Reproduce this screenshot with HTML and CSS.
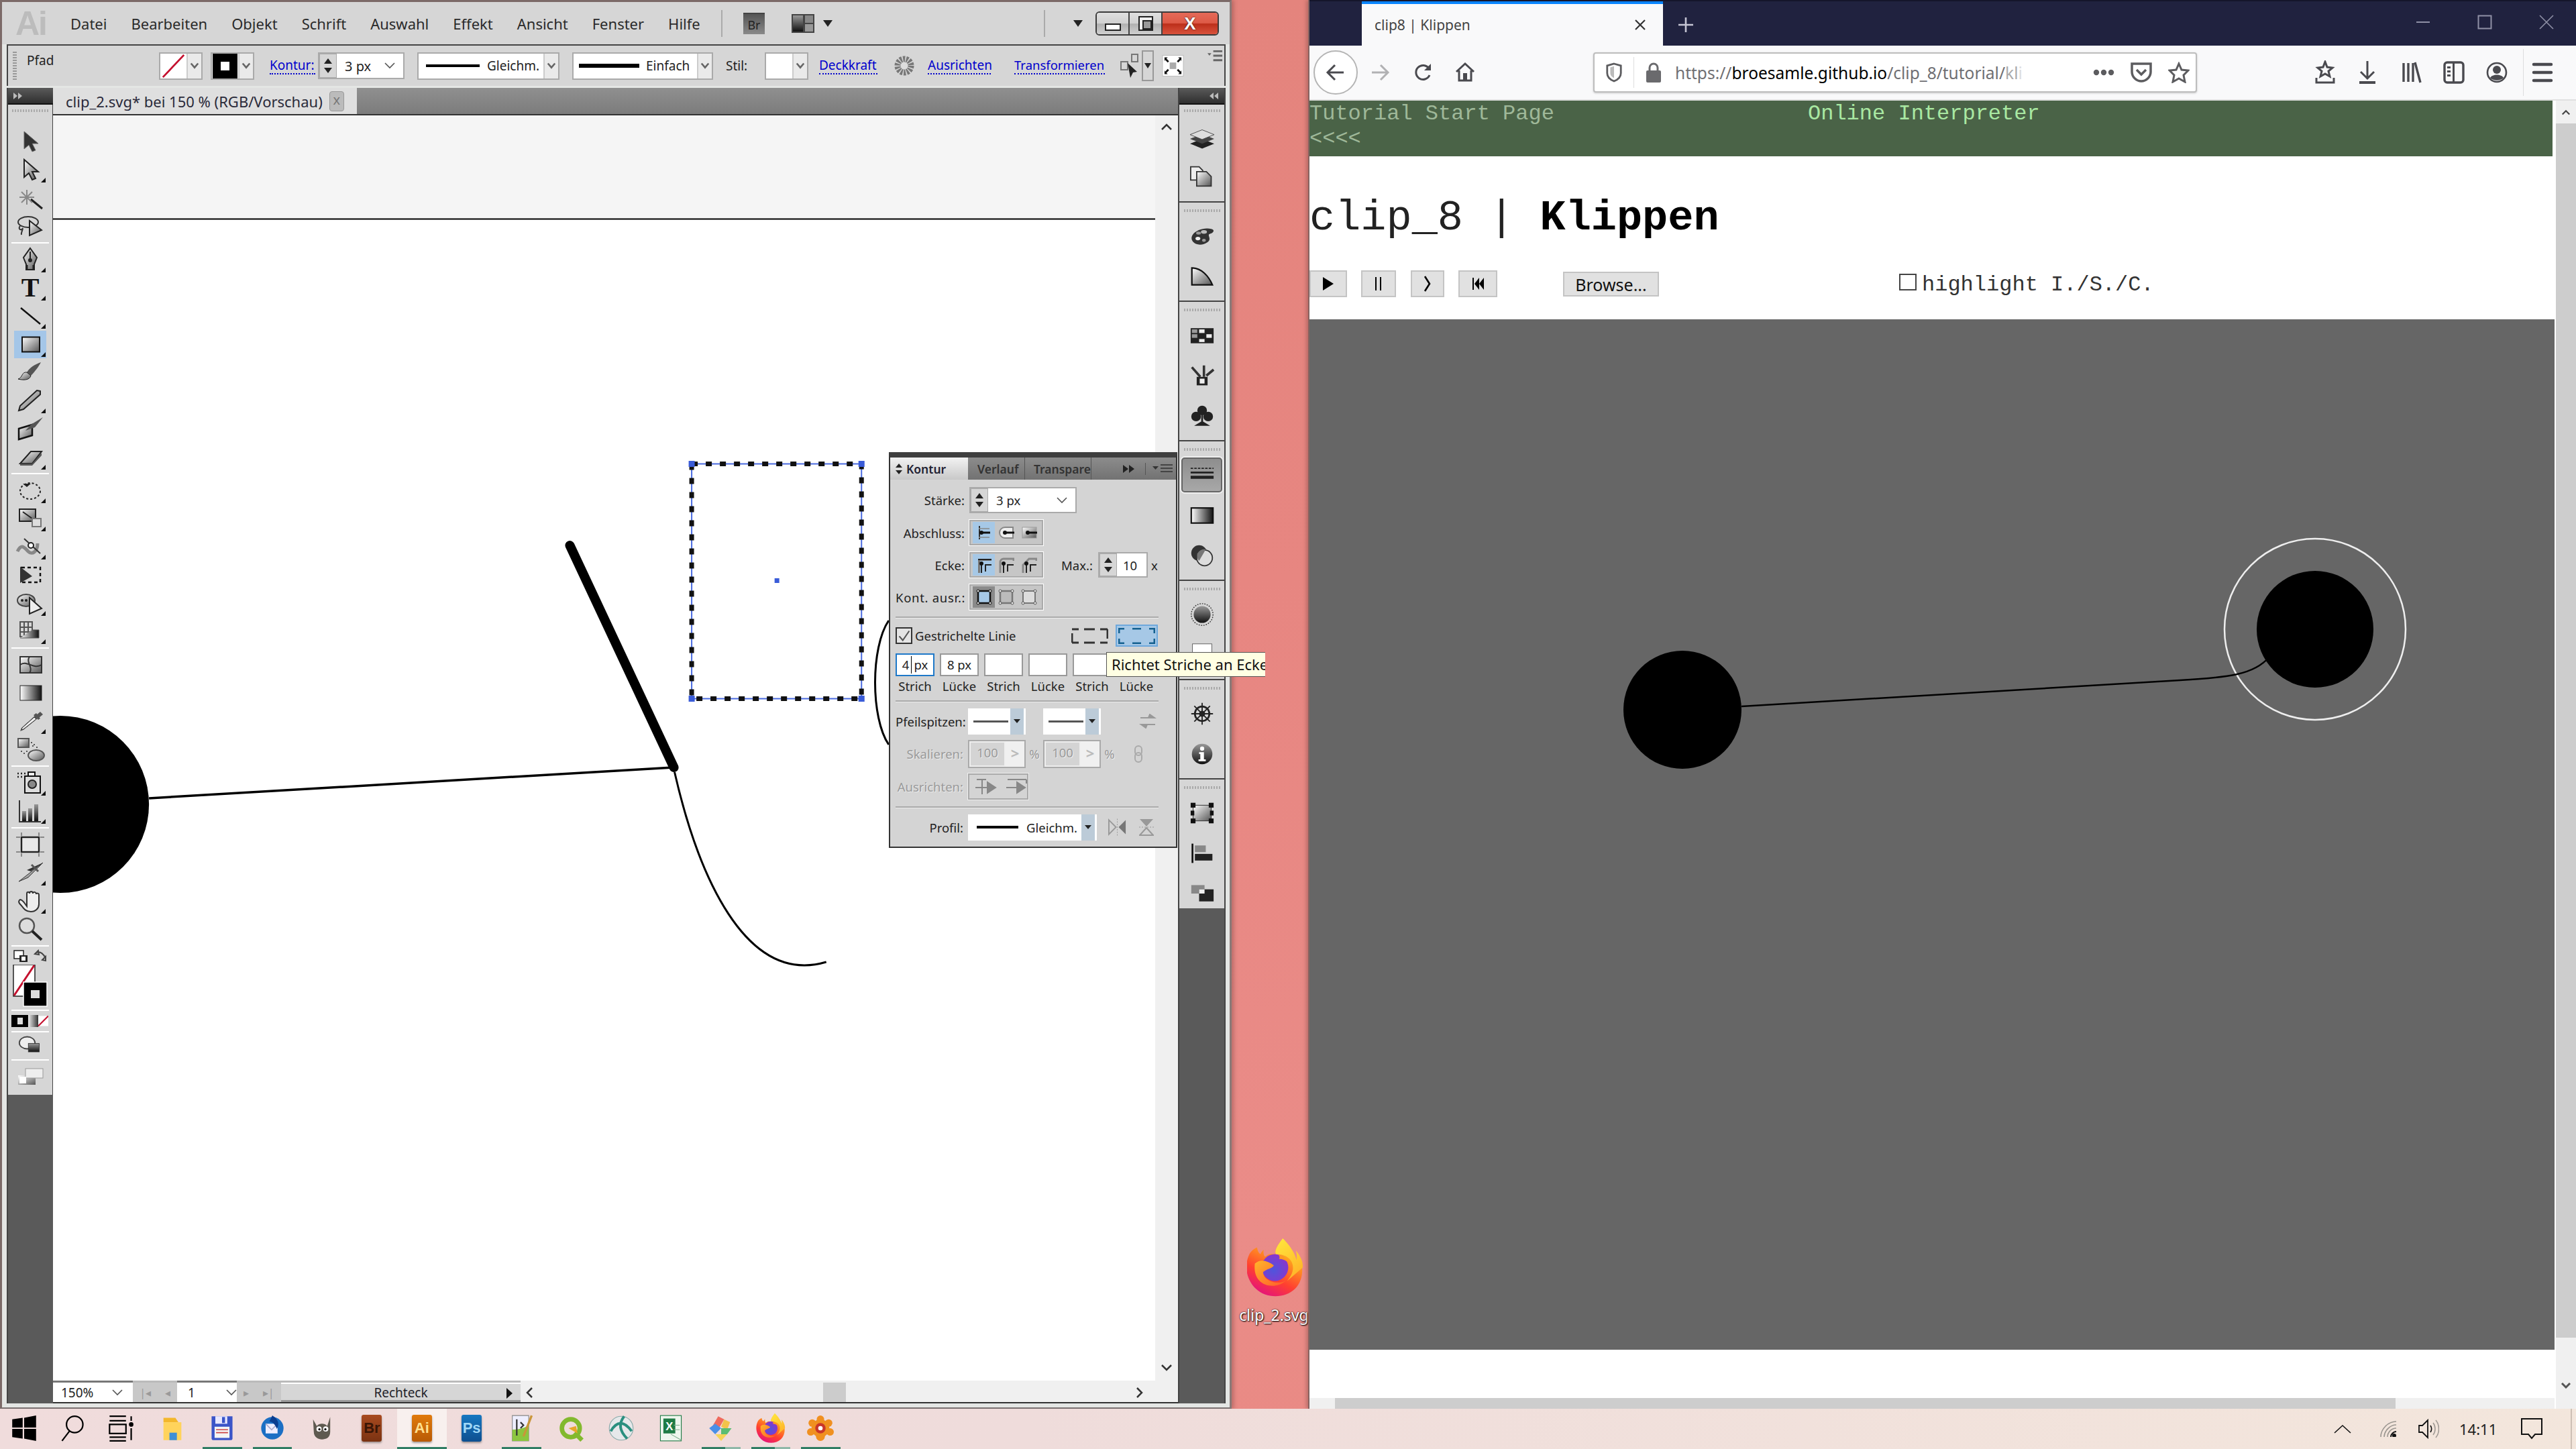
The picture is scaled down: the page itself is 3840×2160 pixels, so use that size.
FILE: index.html
```html
<!DOCTYPE html>
<html lang="de">
<head>
<meta charset="utf-8">
<title>Illustrator und Firefox</title>
<link rel="stylesheet" href="styles.css">
</head>
<body>
<svg class="defs" aria-hidden="true">
  <defs>
    <linearGradient id="gr" x1="0" y1="0" x2="1" y2="1"><stop offset="0" stop-color="#fff"/><stop offset="1" stop-color="#555"/></linearGradient>
    <linearGradient id="grd" x1="0" y1="0" x2="0" y2="1"><stop offset="0" stop-color="#999"/><stop offset="1" stop-color="#111"/></linearGradient>
    <linearGradient id="grh" x1="0" y1="0" x2="1" y2="0"><stop offset="0" stop-color="#fff"/><stop offset="1" stop-color="#111"/></linearGradient>
    <linearGradient id="ffBody" x1=".85" y1="0" x2=".35" y2="1"><stop offset="0" stop-color="#ffe23c"/><stop offset=".35" stop-color="#ff9a1f"/><stop offset=".7" stop-color="#ff3f30"/><stop offset="1" stop-color="#e5147a"/></linearGradient>
    <linearGradient id="ffTop" x1="0" y1="0" x2=".5" y2="1"><stop offset="0" stop-color="#ffe93d"/><stop offset="1" stop-color="#ffb52a"/></linearGradient>
    <radialGradient id="ffGlobe" cx=".45" cy=".6" r=".6"><stop offset="0" stop-color="#4f55dc"/><stop offset="1" stop-color="#8a35cc"/></radialGradient>
    <linearGradient id="ffFox" x1="0" y1="0" x2="1" y2="1"><stop offset="0" stop-color="#ffb52a"/><stop offset="1" stop-color="#ff5a2a"/></linearGradient>
    <symbol id="ffLogo" viewBox="0 0 250 260">
      <path d="M8 75C-12 120-6 182 40 226c45 44 130 44 175 0 45-45 40-120 5-171 5 20 3 38 2 40C206 40 160 0 160 0c-34 44-36 60-30 72-28-8-36 0-50 10-6-8-8-22-5-32-10 6-15 20-15 20-10-6-14-20-15-30C26 48 15 60 8 75Z" fill="url(#ffBody)"/>
      <path d="M160 0c-34 44-36 60-30 72 60-6 108 50 50 118l70-60c2-30-14-56-30-75 5 20 3 38 2 40C206 40 160 0 160 0Z" fill="url(#ffTop)"/>
      <circle cx="125" cy="130" r="60" fill="url(#ffGlobe)"/>
      <path d="M35 112c25-22 55-14 85 8-8 16-30 14-48 30 0 34 55 60 100 40-44 42-150 28-137-78Z" fill="url(#ffFox)"/>
      <path d="M140 72c20 4 38 18 42 34-8-8-24-16-38-14 4-8 2-14-4-20Z" fill="#ff9a1f"/>
    </symbol>
    <symbol id="chev" viewBox="0 0 16 10"><path d="M1 1l7 7 7-7" fill="none" stroke="#555" stroke-width="1.6"/></symbol>
    <symbol id="chevb" viewBox="0 0 16 12"><path d="M2 2l6 7 6-7" fill="none" stroke="#666" stroke-width="3"/></symbol>
  </defs>
</svg>

<main class="desktop">
  <div class="shortcut">
    <svg class="shortcut-logo"><use href="#ffLogo"/></svg>
    <span class="shortcut-label">clip_2.svg</span>
  </div>

  <section class="ai">
    <header class="ai-menu">
      <span class="ai-logo">Ai</span>
      <nav class="ai-menu-items">
        <span>Datei</span><span>Bearbeiten</span><span>Objekt</span><span>Schrift</span><span>Auswahl</span><span>Effekt</span><span>Ansicht</span><span>Fenster</span><span>Hilfe</span>
      </nav>
      <i class="vsep sep-a"></i>
      <span class="br-badge">Br</span>
      <svg class="layout-ic" viewBox="0 0 36 30"><rect x="1" y="1" width="34" height="28" fill="#444"/><rect x="3" y="3" width="15" height="24" fill="url(#grd)"/><rect x="21" y="3" width="12" height="11" fill="#888"/><rect x="21" y="16" width="12" height="11" fill="#999"/></svg>
      <i class="tri-down tri-a"></i>
      <i class="vsep sep-b"></i>
      <i class="tri-down tri-b"></i>
      <div class="winbtns">
        <span class="winbtn"><i class="w-min"></i></span>
        <span class="winbtn"><i class="w-max"></i></span>
        <span class="winbtn w-close">X</span>
      </div>
    </header>

    <div class="ai-control">
      <i class="grip-v"></i>
      <span class="ctl-path">Pfad</span>
      <div class="swatch-sel">
        <svg class="sw" viewBox="0 0 40 40"><rect width="40" height="40" fill="#fff"/><path d="M3 38L37 2" stroke="#c4102e" stroke-width="3"/></svg>
        <span class="sel-btn"><svg class="chevb"><use href="#chevb"/></svg></span>
      </div>
      <div class="swatch-sel stroke-sel">
        <svg class="sw" viewBox="0 0 40 40"><rect width="40" height="40" fill="#000"/><rect x="13" y="13" width="14" height="14" fill="#fff"/></svg>
        <span class="sel-btn"><svg class="chevb"><use href="#chevb"/></svg></span>
      </div>
      <a class="ctl-link lk-kontur">Kontur:</a>
      <div class="num-field nf-kontur"><span class="spin"><i></i><i></i></span><span class="num-val">3 px</span><svg class="chev"><use href="#chev"/></svg></div>
      <div class="line-sel ls-gleich"><i class="ln"></i><span>Gleichm.</span><span class="sel-btn"><svg class="chevb"><use href="#chevb"/></svg></span></div>
      <div class="line-sel ls-einfach"><i class="ln ln-thick"></i><span>Einfach</span><span class="sel-btn"><svg class="chevb"><use href="#chevb"/></svg></span></div>
      <span class="ctl-stil">Stil:</span>
      <div class="swatch-sel style-sel"><span class="sw sw-blank"></span><span class="sel-btn"><svg class="chevb"><use href="#chevb"/></svg></span></div>
      <a class="ctl-link lk-deck">Deckkraft</a>
      <svg class="recolor" viewBox="0 0 30 40"><circle cx="15" cy="20" r="10" fill="none" stroke="#777" stroke-width="9" stroke-dasharray="3 1.5"/><circle cx="15" cy="20" r="5" fill="#ddd"/></svg>
      <a class="ctl-link lk-aus">Ausrichten</a>
      <a class="ctl-link lk-trans">Transformieren</a>
      <svg class="isolate-ic" viewBox="0 0 30 40"><rect x="2" y="14" width="10" height="12" fill="none" stroke="#777" stroke-width="2"/><rect x="18" y="3" width="9" height="11" fill="none" stroke="#777" stroke-width="2"/><path d="M12 16l4 22 4-8 6-1Z" fill="#222"/></svg>
      <span class="mini-drop"><i class="tri-down"></i></span>
      <svg class="xform-ic" viewBox="0 0 34 40"><rect x="1" y="4" width="32" height="32" fill="#fff" stroke="#bbb"/><rect x="12" y="15" width="10" height="10" fill="#aaa"/><path d="M4 7l5 0-2 2 4 4-2 2-4-4-1 2ZM30 7l-5 0 2 2-4 4 2 2 4-4 1 2ZM4 33l5 0-2-2 4-4-2-2-4 4-1-2ZM30 33l-5 0 2-2-4-4 2-2 4 4 1-2Z" fill="#111"/></svg>
      <svg class="pmenu-ic" viewBox="0 0 24 18"><path d="M0 4h6l-3 4Z" fill="#666"/><path d="M9 1h14M9 8h14M9 15h14" stroke="#666" stroke-width="3"/></svg>
    </div>

    <div class="ai-body">
      <aside class="tools">
        <div class="side-head"><svg class="dbl" viewBox="0 0 14 12"><path d="M0 1l6 5-6 5ZM7 1l6 5-6 5Z" fill="#bbb"/></svg></div>
        <div class="tool-panel">
          <div class="tool-grip"><i class="dots"></i></div>
          <div class="tool"><svg viewBox="0 0 46 40"><path d="M14 5v26l7-6 5 10 5-2-5-10h9Z" fill="#333" stroke="#666"/></svg></div>
          <div class="tool more"><svg viewBox="0 0 46 40"><path d="M14 5v26l7-6 5 10 5-2-5-10h9Z" fill="url(#gr)" stroke="#222" stroke-width="2"/></svg></div>
          <div class="tool"><svg viewBox="0 0 46 40"><path d="M24 22l17 14" stroke="#222" stroke-width="3"/><path d="M18 8v22M7 19h22M10 11l16 16M26 11L10 27" stroke="#888" stroke-width="2"/></svg></div>
          <div class="tool"><svg viewBox="0 0 46 40"><ellipse cx="20" cy="14" rx="15" ry="8" fill="none" stroke="#333" stroke-width="2"/><path d="M8 20c-4 4 2 8 4 3-1 6-3 7-2 10" fill="none" stroke="#333" stroke-width="2"/><path d="M22 12v22l18-8Z" fill="url(#gr)" stroke="#222" stroke-width="2"/></svg></div>
          <i class="tool-sep"></i>
          <div class="tool more"><svg viewBox="0 0 46 40"><path d="M23 3l10 14-4 10v8H17v-8l-4-10Z" fill="url(#gr)" stroke="#222" stroke-width="2"/><path d="M23 8v12" stroke="#222" stroke-width="2"/><circle cx="23" cy="21" r="3" fill="#222"/><path d="M18 28v8M28 28v8" stroke="#222" stroke-width="3"/></svg></div>
          <div class="tool more"><span class="tool-t">T</span></div>
          <div class="tool more"><svg viewBox="0 0 46 40"><path d="M9 8l29 24" stroke="#111" stroke-width="2.4"/></svg></div>
          <div class="tool more on"><svg viewBox="0 0 48 40"><rect x="12" y="9" width="26" height="22" fill="url(#gr)" stroke="#111" stroke-width="2"/></svg></div>
          <div class="tool"><svg viewBox="0 0 46 40"><path d="M39 5C30 8 22 13 18 20l6 5C30 19 36 11 39 5Z" fill="#555"/><path d="M18 20c-8-1-6 8-13 10 8 2 17 2 19-5Z" fill="url(#gr)" stroke="#222"/></svg></div>
          <div class="tool more"><svg viewBox="0 0 46 40"><path d="M38 6l-5-1L8 28l-2 7 7-2 25-22Z" fill="url(#gr)" stroke="#222" stroke-width="2"/></svg></div>
          <div class="tool"><svg viewBox="0 0 46 40"><path d="M6 20l20-6v16l-20 6Z" fill="url(#gr)" stroke="#111" stroke-width="2.5"/><path d="M42 3L24 14l-8 9 14-5Z" fill="#555"/></svg></div>
          <div class="tool more"><svg viewBox="0 0 46 40"><path d="M8 30l16-18h16L26 30Z" fill="url(#gr)" stroke="#222" stroke-width="2"/><path d="M8 30h18l14-16v4L26 33H8Z" fill="#555"/></svg></div>
          <i class="tool-sep"></i>
          <div class="tool more"><svg viewBox="0 0 46 40"><ellipse cx="23" cy="21" rx="15" ry="12" fill="none" stroke="#222" stroke-width="2" stroke-dasharray="3 3"/><path d="M12 10h12l-6 5Z" fill="#222"/></svg></div>
          <div class="tool more"><svg viewBox="0 0 46 40"><rect x="7" y="6" width="24" height="18" fill="url(#gr)" stroke="#222" stroke-width="2"/><path d="M12 10l14 10" stroke="#222" stroke-width="2"/><rect x="26" y="20" width="13" height="12" fill="#ddd" stroke="#777" stroke-width="2"/></svg></div>
          <div class="tool more"><svg viewBox="0 0 46 40"><path d="M4 27c6-12 10-6 16 0s14 0 14-12" fill="none" stroke="#888" stroke-width="5"/><path d="M14 8l24 22" stroke="#333" stroke-width="2"/><circle cx="24" cy="18" r="4" fill="#fff" stroke="#222" stroke-width="2"/></svg></div>
          <div class="tool"><svg viewBox="0 0 46 40"><rect x="10" y="9" width="28" height="22" fill="none" stroke="#111" stroke-width="2.5" stroke-dasharray="5 4"/><path d="M8 8v24l18-10Z" fill="#333"/></svg></div>
          <div class="tool more"><svg viewBox="0 0 46 40"><ellipse cx="17" cy="16" rx="13" ry="9" fill="url(#gr)" stroke="#444" stroke-width="2"/><path d="M22 12v24l18-8Z" fill="#eee" stroke="#222" stroke-width="2"/><circle cx="11" cy="16" r="2" fill="#222"/><circle cx="17" cy="16" r="2" fill="#222"/></svg></div>
          <div class="tool more"><svg viewBox="0 0 46 40"><path d="M8 6h18v22H8ZM14 6v22M20 6v22M8 14h18M8 21h18" fill="none" stroke="#555" stroke-width="2"/><path d="M26 18h10v12H8" fill="url(#grh)" stroke="#555"/></svg></div>
          <i class="tool-sep"></i>
          <div class="tool"><svg viewBox="0 0 46 40"><rect x="8" y="8" width="32" height="24" fill="url(#gr)" stroke="#333" stroke-width="2"/><path d="M8 20c10-8 20 8 32 0M22 8c-6 8 6 16 0 24" fill="none" stroke="#333" stroke-width="2"/></svg></div>
          <div class="tool"><svg viewBox="0 0 46 40"><rect x="8" y="9" width="32" height="22" fill="url(#grh)" stroke="#222"/></svg></div>
          <div class="tool more"><svg viewBox="0 0 46 40"><path d="M38 6l4 4-6 5-4-4ZM32 8l6 8-3 2-7-7ZM30 12l4 4L13 33l-5 2 2-5Z" fill="#555"/><path d="M29 14l3 3-19 15-3 1 1-3Z" fill="#eee" stroke="#333"/></svg></div>
          <div class="tool"><svg viewBox="0 0 46 40"><rect x="5" y="4" width="16" height="13" fill="url(#gr)" stroke="#555" stroke-width="2"/><ellipse cx="32" cy="29" rx="12" ry="8" fill="url(#gr)" stroke="#555" stroke-width="2"/><path d="M24 10h2M28 13h2M32 17h2M26 15h2M10 22v2M14 25v2M18 22v2" stroke="#555" stroke-width="2"/></svg></div>
          <i class="tool-sep"></i>
          <div class="tool more"><svg viewBox="0 0 46 40"><path d="M4 6h2M9 6h2M14 6h2M4 11h2M9 11h2" stroke="#222" stroke-width="2.4"/><rect x="15" y="10" width="23" height="25" fill="#ddd" stroke="#111" stroke-width="2"/><rect x="20" y="4" width="10" height="6" fill="#eee" stroke="#111" stroke-width="2"/><circle cx="26" cy="22" r="6" fill="#888" stroke="#222" stroke-width="2"/></svg></div>
          <div class="tool more"><svg viewBox="0 0 46 40"><path d="M7 4v32h32" fill="none" stroke="#333" stroke-width="2"/><rect x="11" y="20" width="6" height="15" fill="url(#grd)"/><rect x="20" y="16" width="6" height="19" fill="url(#grd)"/><rect x="29" y="10" width="6" height="25" fill="url(#grd)"/></svg></div>
          <i class="tool-sep"></i>
          <div class="tool"><svg viewBox="0 0 46 40"><rect x="10" y="9" width="26" height="22" fill="#e8e8e8" stroke="#222" stroke-width="2.4"/><path d="M2 9h6M38 9h6M2 31h6M38 31h6M10 2v5M36 2v5M10 33v5M36 33v5" stroke="#888" stroke-width="2"/></svg></div>
          <div class="tool more"><svg viewBox="0 0 46 40"><path d="M42 5L6 33l14-6Z" fill="url(#gr)" stroke="#333"/><path d="M42 5L24 18l-6-2Z" fill="#333"/><path d="M25 8l10 10" stroke="#555" stroke-width="3"/></svg></div>
          <div class="tool more"><svg viewBox="0 0 46 40"><path d="M8 18c4 0 7 6 10 10V9c0-3 4-3 4 0 0-4 5-4 5 0 0-3 5-3 5 1 0-2 4-2 4 1v14c0 6-5 11-12 11-8 0-11-5-14-9-3-3-6-6-2-9Z" fill="#eee" stroke="#333" stroke-width="2"/></svg></div>
          <div class="tool"><svg viewBox="0 0 46 40"><circle cx="18" cy="15" r="11" fill="#ddd" stroke="#555" stroke-width="2.5"/><path d="M26 23l14 13" stroke="#222" stroke-width="4"/></svg></div>
          <i class="tool-sep"></i>
          <div class="tool-swap"><svg viewBox="0 0 66 24"><rect x="9" y="3" width="14" height="12" fill="#fff" stroke="#222" stroke-width="1.5"/><rect x="17" y="10" width="12" height="10" fill="#222"/><rect x="20" y="12" width="6" height="6" fill="#fff"/><path d="M42 6c6-3 12 3 14 9M40 8l5-5 1 6ZM56 18l-5-1 5-5Z" fill="none" stroke="#444" stroke-width="2"/></svg></div>
          <div class="tool-fs"><svg viewBox="0 0 66 66"><rect x="8" y="0" width="32" height="47" fill="#fff" stroke="#222" stroke-width="1.5"/><path d="M9 46l30-45" stroke="#c4102e" stroke-width="3"/><rect x="23" y="26" width="35" height="36" fill="#000" stroke="#fff" stroke-width="1.5"/><rect x="34" y="38" width="13" height="12" fill="#ddd"/></svg></div>
          <i class="tool-sep"></i>
          <div class="tool-modes"><span class="m m-c"><i></i></span><span class="m m-g"></span><span class="m m-n"><svg viewBox="0 0 18 18"><rect width="18" height="18" fill="#fff"/><path d="M0 18L18 0" stroke="#c4102e" stroke-width="2.5"/></svg></span></div>
          <i class="tool-sep"></i>
          <div class="tool tool-draw"><svg viewBox="0 0 46 40"><ellipse cx="18" cy="15" rx="13" ry="10" fill="#eee" stroke="#444" stroke-width="2"/><rect x="20" y="16" width="18" height="14" fill="url(#grd)" stroke="#333"/></svg></div>
          <i class="tool-sep"></i>
          <div class="tool"><svg viewBox="0 0 46 40"><rect x="5" y="18" width="26" height="14" fill="url(#gr)"/><rect x="16" y="8" width="26" height="14" fill="#eee" stroke="#999"/><rect x="7" y="20" width="10" height="10" fill="#fff"/></svg></div>
        </div>
      </aside>

      <div class="doc">
        <div class="tabstrip">
          <div class="doc-tab"><span>clip_2.svg* bei 150 % (RGB/Vorschau)</span><i class="tab-x">x</i></div>
        </div>
        <div class="workspace">
          <div class="artwork">
            <svg class="art-svg" viewBox="80 172 1642 1886" preserveAspectRatio="none">
              <rect x="80" y="172" width="1642" height="154" fill="#f5f5f5"/>
              <path d="M80 326.5h1642" stroke="#000" stroke-width="2"/>
              <circle cx="91" cy="1199" r="132" fill="#000"/>
              <path d="M223 1190L1004 1144" stroke="#000" stroke-width="3.5"/>
              <path d="M850 813L1005 1144" stroke="#000" stroke-width="14" stroke-linecap="round"/>
              <path d="M1006 1151C1040 1300 1110 1470 1232 1434" fill="none" stroke="#000" stroke-width="3"/>
              <path d="M1325 925C1298 965 1298 1070 1325 1110" fill="none" stroke="#000" stroke-width="3"/>
              <rect x="1031.500" y="691.500" width="253" height="350" fill="#fff" stroke="#4a6be0" stroke-width="2"/>
              <rect x="1031.500" y="691.500" width="253" height="350" fill="none" stroke="#111" stroke-width="7" stroke-dasharray="9 12"/>
              <g fill="#3a5cd8"><rect x="1027" y="687" width="9" height="9"/><rect x="1280" y="687" width="9" height="9"/><rect x="1027" y="1037" width="9" height="9"/><rect x="1280" y="1037" width="9" height="9"/><rect x="1155" y="862" width="7" height="7"/></g>
            </svg>
          </div>
          <div class="ai-vscroll"><svg class="sc-ic" viewBox="0 0 16 10"><path d="M1 9l7-7 7 7" fill="none" stroke="#333" stroke-width="2.5"/></svg><svg class="sc-ic" viewBox="0 0 16 10"><path d="M1 1l7 7 7-7" fill="none" stroke="#333" stroke-width="2.5"/></svg></div>
        </div>
        <div class="status">
          <div class="st-field st-zoom"><span>150%</span><svg class="chev"><use href="#chev"/></svg></div>
          <div class="st-nav"><span class="bar-tri">|◂</span><span class="bar-tri">◂</span></div>
          <div class="st-field st-page"><span>1</span><svg class="chev"><use href="#chev"/></svg></div>
          <div class="st-nav st-nav2"><span class="bar-tri">▸</span><span class="bar-tri">▸|</span></div>
          <div class="st-tool"><span>Rechteck</span><i class="st-arrow"></i></div>
          <div class="st-scroll">
            <svg class="sc-h" viewBox="0 0 10 16"><path d="M9 1L2 8l7 7" fill="none" stroke="#333" stroke-width="2.5"/></svg>
            <i class="st-thumb"></i>
            <svg class="sc-h" viewBox="0 0 10 16"><path d="M1 1l7 7-7 7" fill="none" stroke="#333" stroke-width="2.5"/></svg>
          </div>
        </div>
      </div>

      <aside class="dock">
        <div class="side-head head-r"><svg class="dbl" viewBox="0 0 14 12"><path d="M6 1L0 6l6 5ZM13 1L7 6l6 5Z" fill="#bbb"/></svg></div>
        <div class="dock-group g1">
          <div class="dock-grip"><i class="dots"></i></div>
          <div class="dock-ic"><svg viewBox="0 0 46 40"><path d="M23 20L3 28l20 8 20-8Z" fill="#222"/><path d="M23 12L3 20l20 8 20-8Z" fill="#444"/><path d="M23 5L3 13l20 8 20-8Z" fill="#ddd" stroke="#444"/></svg></div>
          <div class="dock-ic"><svg viewBox="0 0 46 40"><path d="M4 4h14l6 6v16H4Z" fill="#eee" stroke="#333" stroke-width="2"/><path d="M14 12h16l8 8v16H14Z" fill="url(#gr)" stroke="#333" stroke-width="2"/></svg></div>
        </div>
        <div class="dock-group">
          <div class="dock-grip"><i class="dots"></i></div>
          <div class="dock-ic"><svg viewBox="0 0 46 40"><path d="M6 26C2 14 24 4 38 8c8 2 2 8-2 8-6 2 4 8-4 14C24 36 10 36 6 26Z" fill="#333"/><ellipse cx="16" cy="24" rx="4" ry="3" fill="#eee"/><ellipse cx="26" cy="13" rx="5" ry="3" fill="#bbb"/><ellipse cx="17" cy="15" rx="4" ry="2.500" fill="#999"/><ellipse cx="26" cy="27" rx="3" ry="2.500" fill="#999"/></svg></div>
          <div class="dock-ic"><svg viewBox="0 0 46 40"><path d="M6 34V6c16 0 28 14 34 28Z" fill="url(#gr)" stroke="#111" stroke-width="2.500"/></svg></div>
        </div>
        <div class="dock-group g3">
          <div class="dock-grip"><i class="dots"></i></div>
          <div class="dock-ic"><svg viewBox="0 0 46 40"><rect x="4" y="8" width="38" height="25" fill="#222"/><g fill="#999"><rect x="6" y="10" width="9" height="6"/><rect x="6" y="18" width="9" height="6"/></g><g fill="#eee"><rect x="18" y="10" width="9" height="6"/><rect x="30" y="18" width="9" height="6"/><rect x="18" y="26" width="9" height="5"/></g></svg></div>
          <div class="dock-ic"><svg viewBox="0 0 46 40"><rect x="14" y="22" width="18" height="14" fill="#222"/><rect x="19" y="25" width="8" height="8" fill="#eee"/><path d="M6 6l14 16M26 3v19M42 10L30 20" stroke="#333" stroke-width="4"/></svg></div>
          <div class="dock-ic"><svg viewBox="0 0 46 40"><circle cx="23" cy="11" r="8" fill="#222"/><circle cx="13" cy="21" r="8" fill="#222"/><circle cx="33" cy="21" r="8" fill="#222"/><path d="M23 14v18M15 35h16l-8-5Z" fill="#222" stroke="#222" stroke-width="3"/></svg></div>
        </div>
        <div class="dock-group g4">
          <div class="dock-grip"><i class="dots"></i></div>
          <div class="dock-ic on"><svg viewBox="0 0 46 40"><path d="M4 9h38" stroke="#222" stroke-width="2" stroke-dasharray="4 2"/><path d="M4 16h38" stroke="#222" stroke-width="3"/><path d="M4 24h38" stroke="#222" stroke-width="5"/></svg></div>
          <div class="dock-ic"><svg viewBox="0 0 46 40"><rect x="5" y="8" width="36" height="25" fill="url(#grh)" stroke="#111" stroke-width="2.400"/></svg></div>
          <div class="dock-ic"><svg viewBox="0 0 46 40"><circle cx="18" cy="16" r="13" fill="#333"/><circle cx="27" cy="24" r="13" fill="#ddd" stroke="#333" stroke-width="2"/><path d="M18 29a13 13 0 0 1-3-12 13 13 0 0 1 14-7z" fill="#777"/></svg></div>
        </div>
        <div class="dock-group g5">
          <div class="dock-grip"><i class="dots"></i></div>
          <div class="dock-ic"><svg viewBox="0 0 46 40"><circle cx="23" cy="20" r="18" fill="none" stroke="#333" stroke-width="1.500" stroke-dasharray="2 2"/><circle cx="23" cy="20" r="14" fill="url(#grd)"/></svg></div>
          <div class="dock-ic"><svg viewBox="0 0 46 40"><rect x="7" y="2" width="32" height="30" fill="#fff" stroke="#555"/></svg></div>
        </div>
        <div class="dock-group">
          <div class="dock-grip"><i class="dots"></i></div>
          <div class="dock-ic"><svg viewBox="0 0 46 40"><circle cx="23" cy="20" r="12" fill="none" stroke="#222" stroke-width="3"/><circle cx="23" cy="20" r="5" fill="#222"/><path d="M5 20h36M23 2v36M10 7l26 26M36 7L10 33" stroke="#222" stroke-width="2"/></svg></div>
          <div class="dock-ic"><svg viewBox="0 0 46 40"><circle cx="23" cy="20" r="17" fill="url(#grd)"/><circle cx="23" cy="11" r="3.500" fill="#fff"/><path d="M18 17h8v12h3v3H17v-3h3v-9h-2Z" fill="#fff"/></svg></div>
        </div>
        <div class="dock-group g7">
          <div class="dock-grip"><i class="dots"></i></div>
          <div class="dock-ic"><svg viewBox="0 0 46 40"><rect x="8" y="7" width="30" height="26" fill="url(#gr)" stroke="#222"/><g fill="#111"><rect x="4" y="3" width="8" height="8"/><rect x="34" y="3" width="8" height="8"/><rect x="4" y="29" width="8" height="8"/><rect x="34" y="29" width="8" height="8"/><rect x="4" y="16" width="6" height="8"/><rect x="36" y="16" width="6" height="8"/></g></svg></div>
          <div class="dock-ic"><svg viewBox="0 0 46 40"><path d="M7 4v32" stroke="#111" stroke-width="3"/><rect x="11" y="7" width="18" height="11" fill="#888"/><rect x="11" y="21" width="29" height="11" fill="#222"/></svg></div>
          <div class="dock-ic"><svg viewBox="0 0 46 40"><rect x="5" y="6" width="22" height="14" fill="#888"/><rect x="18" y="13" width="24" height="20" fill="#222"/><rect x="18" y="13" width="9" height="7" fill="#eee"/></svg></div>
        </div>
        <div class="dock-rest"></div>
      </aside>
    </div>

    <div class="stroke-panel">
      <div class="sp-tabs">
        <span class="sp-tab sp-on"><i class="updown"></i>Kontur</span>
        <span class="sp-tab t-verlauf">Verlauf</span>
        <span class="sp-tab t-trans"><b>Transparenz</b></span>
        <svg class="sp-more" viewBox="0 0 18 14"><path d="M0 1l8 6-8 6ZM9 1l8 6-8 6Z" fill="#222"/></svg>
        <i class="sp-tick"></i>
        <svg class="sp-menu" viewBox="0 0 30 16"><path d="M0 4h9l-4.500 5Z" fill="#333"/><path d="M12 2h18M12 7h18M12 12h18" stroke="#444" stroke-width="2"/></svg>
      </div>
      <div class="sp-body">
        <div class="sp-row r-first">
          <label class="sp-l">Stärke:</label>
          <div class="num-field nf-staerke"><span class="spin"><i></i><i></i></span><span class="num-val">3 px</span><svg class="chev"><use href="#chev"/></svg></div>
        </div>
        <div class="sp-row">
          <label class="sp-l">Abschluss:</label>
          <div class="seg">
            <span class="seg-b on"><svg viewBox="0 0 24 24"><path d="M5 2v20" stroke="#333" stroke-width="2"/><path d="M5 12h16" stroke="#111" stroke-width="3"/><path d="M4 6h16M4 19h16" stroke="#888" stroke-width="1.500"/><circle cx="8" cy="12" r="3" fill="#111"/></svg></span>
            <span class="seg-b"><svg viewBox="0 0 24 24"><path d="M22 4H10a8 8 0 0 0 0 16h12Z" fill="#eee" stroke="#888" stroke-width="2"/><path d="M8 12h16" stroke="#111" stroke-width="3"/><circle cx="10" cy="12" r="3" fill="#111"/></svg></span>
            <span class="seg-b"><svg viewBox="0 0 24 24"><rect x="2" y="4" width="21" height="16" fill="url(#gr)" stroke="#999"/><path d="M8 12h16" stroke="#111" stroke-width="3"/><circle cx="10" cy="12" r="3" fill="#111"/></svg></span>
          </div>
        </div>
        <div class="sp-row">
          <label class="sp-l">Ecke:</label>
          <div class="seg">
            <span class="seg-b on"><svg viewBox="0 0 24 24"><path d="M3 3h20v3H6v18H3Z" fill="#777"/><path d="M3 4h20M8 10v14" stroke="#222" stroke-width="2"/><path d="M14 22V12h9" fill="none" stroke="#222" stroke-width="2"/><circle cx="8" cy="10" r="3" fill="#111"/></svg></span>
            <span class="seg-b"><svg viewBox="0 0 24 24"><path d="M3 24V8a5 5 0 0 1 5-5h15v3" fill="none" stroke="#888" stroke-width="3"/><path d="M8 10v14M14 22V12h9" fill="none" stroke="#222" stroke-width="2"/><circle cx="8" cy="10" r="3" fill="#111"/></svg></span>
            <span class="seg-b"><svg viewBox="0 0 24 24"><path d="M3 24V12L12 3h11v3" fill="none" stroke="#888" stroke-width="3"/><path d="M8 10v14M14 22V12h9" fill="none" stroke="#222" stroke-width="2"/><circle cx="8" cy="10" r="3" fill="#111"/></svg></span>
          </div>
          <label class="sp-max">Max.:</label>
          <div class="num-field nf-max"><span class="spin"><i></i><i></i></span><span class="num-val">10</span></div>
          <span class="sp-x">x</span>
        </div>
        <div class="sp-row">
          <label class="sp-l sp-wide">Kont. ausr.:</label>
          <div class="seg">
            <span class="seg-b on dk"><svg viewBox="0 0 24 24"><rect x="3" y="3" width="18" height="18" fill="#a6c8e6" stroke="#111" stroke-width="2.500"/><g fill="#ddd" stroke="#111"><circle cx="3" cy="3" r="2"/><circle cx="21" cy="3" r="2"/><circle cx="3" cy="21" r="2"/><circle cx="21" cy="21" r="2"/></g></svg></span>
            <span class="seg-b"><svg viewBox="0 0 24 24"><rect x="3" y="3" width="18" height="18" fill="#bbb" stroke="#777" stroke-width="2.500"/><g fill="#eee" stroke="#555"><circle cx="3" cy="3" r="2"/><circle cx="21" cy="3" r="2"/><circle cx="3" cy="21" r="2"/><circle cx="21" cy="21" r="2"/></g></svg></span>
            <span class="seg-b"><svg viewBox="0 0 24 24"><rect x="3" y="3" width="18" height="18" fill="#ddd" stroke="#777" stroke-width="2"/><g fill="#eee" stroke="#555"><circle cx="3" cy="3" r="2"/><circle cx="21" cy="3" r="2"/><circle cx="3" cy="21" r="2"/><circle cx="21" cy="21" r="2"/></g></svg></span>
          </div>
        </div>
        <hr class="sp-div">
        <div class="sp-row dash-row">
          <span class="check"><svg viewBox="0 0 24 24"><path d="M4 13l6 7L21 4" fill="none" stroke="#555" stroke-width="2.400"/></svg></span>
          <span class="check-l">Gestrichelte Linie</span>
          <svg class="dash-a" viewBox="0 0 55 24"><path d="M1 22V8M1 2h10M19 2h16M43 2h11M54 2v14M54 22H43M35 22H19M11 22H1" fill="none" stroke="#333" stroke-width="3"/></svg>
          <span class="dash-b"><svg viewBox="0 0 55 24"><path d="M1 8V1h8M21 1h13M46 1h8v7M54 16v7h-8M34 23H21M9 23H1v-7" fill="none" stroke="#15608f" stroke-width="3"/></svg></span>
        </div>
        <div class="sp-row dash-fields">
          <span class="df df-focus"><span>4</span><i class="caret"></i><span>px</span></span><span class="df">8 px</span><span class="df"></span><span class="df"></span><span class="df"></span>
        </div>
        <div class="dash-labels"><span>Strich</span><span>Lücke</span><span>Strich</span><span>Lücke</span><span>Strich</span><span>Lücke</span></div>
        <hr class="sp-div">
        <div class="sp-row">
          <label class="sp-l sp-l2">Pfeilspitzen:</label>
          <div class="arrow-sel"><i class="ln-a"></i><span class="blue-btn"><i class="tri-down"></i></span></div>
          <div class="arrow-sel as-2"><i class="ln-a"></i><span class="blue-btn"><i class="tri-down"></i></span></div>
          <svg class="swap-ic" viewBox="0 0 26 22"><path d="M2 6h18M16 1l7 5H14ZM24 16H6M10 21l-7-5h9Z" fill="#999" stroke="#999" stroke-width="2"/></svg>
        </div>
        <div class="sp-row dis">
          <label class="sp-l sp-l2">Skalieren:</label>
          <div class="scale-f"><span>100</span><i>&gt;</i></div><span class="pct">%</span>
          <div class="scale-f"><span>100</span><i>&gt;</i></div><span class="pct">%</span>
          <svg class="chain" viewBox="0 0 14 26"><rect x="2" y="1" width="10" height="14" rx="5" fill="none" stroke="#aaa" stroke-width="2"/><rect x="2" y="11" width="10" height="14" rx="5" fill="none" stroke="#aaa" stroke-width="2"/></svg>
        </div>
        <div class="sp-row dis">
          <label class="sp-l sp-l2">Ausrichten:</label>
          <div class="align-g">
            <svg viewBox="0 0 32 26"><path d="M2 2h14M10 2v22M0 14h18M18 6l12 8-12 8Z" fill="#888" stroke="#888" stroke-width="2"/></svg>
            <svg viewBox="0 0 32 26"><path d="M2 2h28M30 2v6M0 14h16M16 6l12 8-12 8Z" fill="#888" stroke="#888" stroke-width="2"/></svg>
          </div>
        </div>
        <hr class="sp-div">
        <div class="sp-row">
          <label class="sp-l sp-l2">Profil:</label>
          <div class="prof-sel"><i class="ln-p"></i><span>Gleichm.</span><span class="blue-btn"><i class="tri-down"></i></span></div>
          <svg class="prof-a" viewBox="0 0 28 26"><path d="M1 2l11 11L1 24Z" fill="none" stroke="#999" stroke-width="2"/><path d="M27 2L16 13l11 11Z" fill="#777"/><path d="M14 0v26" stroke="#999" stroke-dasharray="2 2"/></svg>
          <svg class="prof-b" viewBox="0 0 22 26"><path d="M1 1h20L11 12Z" fill="#999"/><path d="M1 25h20L11 14Z" fill="none" stroke="#999" stroke-width="2"/><path d="M0 13h22" stroke="#999" stroke-dasharray="2 2"/></svg>
        </div>
      </div>
    </div>
    <div class="tooltip"><span>Richtet Striche an Ecke</span></div>
  </section>

  <section class="ff">
    <div class="ff-title">
      <div class="ff-tab"><span class="ff-tab-t">clip8 | Klippen</span>
        <svg class="ff-tab-x" viewBox="0 0 18 18"><path d="M2 2l14 14M16 2L2 16" stroke="#333" stroke-width="2.200"/></svg></div>
      <svg class="ff-plus" viewBox="0 0 24 24"><path d="M12 1v22M1 12h22" stroke="#c6c6d4" stroke-width="2.600"/></svg>
      <div class="ff-caps">
        <svg viewBox="0 0 22 22"><path d="M1 11h20" stroke="#8f90a6" stroke-width="2"/></svg>
        <svg viewBox="0 0 22 22"><rect x="1.500" y="1.500" width="19" height="19" fill="none" stroke="#8f90a6" stroke-width="2"/></svg>
        <svg viewBox="0 0 22 22"><path d="M1 1l20 20M21 1L1 21" stroke="#8f90a6" stroke-width="1.600"/></svg>
      </div>
    </div>
    <div class="ff-bar">
      <span class="ff-back"><svg viewBox="0 0 32 32"><path d="M28 16H5M15 5L4 16l11 11" fill="none" stroke="#4a4a4f" stroke-width="3"/></svg></span>
      <svg class="tb tb-fw" viewBox="0 0 32 32"><path d="M4 16h23M17 5l11 11-11 11" fill="none" stroke="#b1b1b3" stroke-width="3"/></svg>
      <svg class="tb tb-re" viewBox="0 0 32 32"><path d="M25 20a10.500 10.500 0 1 1-1-10" fill="none" stroke="#4a4a4f" stroke-width="3"/><path d="M27 3v10H17Z" fill="#4a4a4f"/></svg>
      <svg class="tb tb-ho" viewBox="0 0 32 32"><path d="M3 15L16 3l13 12M7 13v15h18V13" fill="none" stroke="#4a4a4f" stroke-width="3"/><rect x="13" y="17" width="6" height="11" fill="#4a4a4f"/></svg>
      <div class="urlbar">
        <svg class="u-shield" viewBox="0 0 28 32"><path d="M14 2l11 3v12c0 7-6 11-11 13C9 28 3 24 3 17V5Z" fill="none" stroke="#5c5c5f" stroke-width="3"/><path d="M14 6v19c-3-2-6-4-6-8V8Z" fill="#bbb"/></svg>
        <i class="u-sep"></i>
        <svg class="u-lock" viewBox="0 0 26 32"><rect x="2" y="13" width="22" height="18" rx="2" fill="#6a6a6d"/><path d="M7 13V9a6 6 0 0 1 12 0v4" fill="none" stroke="#6a6a6d" stroke-width="3"/></svg>
        <span class="u-text">https://<b>broesamle.github.io</b>/clip_8/tutorial/<em>kl</em><u>i</u></span>
        <svg class="u-dots" viewBox="0 0 32 10"><circle cx="5" cy="5" r="4.200" fill="#5c5c5f"/><circle cx="16" cy="5" r="4.200" fill="#5c5c5f"/><circle cx="27" cy="5" r="4.200" fill="#5c5c5f"/></svg>
        <svg class="u-ic" viewBox="0 0 32 32"><path d="M2 3h28v12c0 8-7 14-14 14S2 23 2 15Z" fill="none" stroke="#5c5c5f" stroke-width="3.500"/><path d="M9 12l7 7 7-7" fill="none" stroke="#5c5c5f" stroke-width="3.500"/></svg>
        <svg class="u-ic u-star" viewBox="0 0 32 32"><path d="M16 3l4 9 10 1-7 7 2 10-9-5-9 5 2-10-7-7 10-1Z" fill="none" stroke="#5c5c5f" stroke-width="3"/></svg>
      </div>
      <svg class="tb tb-lib" viewBox="0 0 32 36"><path d="M16 2l3 8 8 1-6 5 2 8-7-4-7 4 2-8-6-5 8-1Z" fill="none" stroke="#4a4a4f" stroke-width="3"/><path d="M3 26v7h26v-7" fill="none" stroke="#4a4a4f" stroke-width="3"/></svg>
      <svg class="tb tb-dl" viewBox="0 0 32 36"><path d="M16 1v26M6 17l10 10 10-10" fill="none" stroke="#4a4a4f" stroke-width="3"/><path d="M4 33h24" stroke="#4a4a4f" stroke-width="4"/></svg>
      <svg class="tb tb-bk" viewBox="0 0 32 36"><path d="M4 4v28M11 4v28M18 4v28M21 3l8 30" stroke="#4a4a4f" stroke-width="3.400"/></svg>
      <svg class="tb tb-sb" viewBox="0 0 32 36"><rect x="2" y="3" width="28" height="30" rx="4" fill="none" stroke="#4a4a4f" stroke-width="3.400"/><rect x="14" y="3" width="3" height="30" fill="#4a4a4f"/><rect x="6" y="9" width="5" height="3" fill="#4a4a4f"/><rect x="6" y="15" width="5" height="3" fill="#4a4a4f"/><rect x="6" y="21" width="5" height="3" fill="#4a4a4f"/></svg>
      <svg class="tb tb-ac" viewBox="0 0 32 36"><circle cx="16" cy="18" r="14" fill="none" stroke="#4a4a4f" stroke-width="2.600"/><circle cx="16" cy="14" r="6" fill="#4a4a4f"/><path d="M6 26c3-6 17-6 20 0-5 5-15 5-20 0Z" fill="#4a4a4f"/></svg>
      <i class="tb-sep"></i>
      <svg class="tb tb-mn" viewBox="0 0 32 36"><path d="M3 6h26M3 18h26M3 30h26" stroke="#4a4a4f" stroke-width="4.500" stroke-linecap="round"/></svg>
    </div>
    <div class="ff-content">
      <div class="page">
        <nav class="site-nav">
          <div class="site-links"><a class="link-muted">Tutorial Start Page</a><a class="link-bright">Online Interpreter</a></div>
          <a class="link-muted">&lt;&lt;&lt;&lt;</a>
        </nav>
        <h1 class="site-h1">clip_8 | <b>Klippen</b></h1>
        <div class="site-ctrl">
          <button class="b-play"><svg viewBox="0 0 20 24"><path d="M2 2l16 10L2 22Z" fill="#000"/></svg></button>
          <button class="b-pause"><svg viewBox="0 0 14 24"><path d="M3 2v20M10 2v20" stroke="#000" stroke-width="2"/></svg></button>
          <button class="b-step"><svg viewBox="0 0 14 24"><path d="M3 1l7 11-7 11" fill="none" stroke="#000" stroke-width="2.600"/></svg></button>
          <button class="b-rew"><svg viewBox="0 0 20 24"><path d="M3 3v18" stroke="#000" stroke-width="2"/><path d="M12 3v18L5 12ZM19 3v18l-7-9Z" fill="#000"/></svg></button>
          <button class="b-browse">Browse...</button>
          <label class="hl"><i class="hl-box"></i>highlight I./S./C.</label>
        </div>
        <div class="clip-stage">
          <svg viewBox="1952 476 1856 1536" preserveAspectRatio="none">
            <circle cx="2508" cy="1058" r="88" fill="#000"/>
            <circle cx="3451" cy="938" r="87" fill="#000"/>
            <circle cx="3451" cy="938" r="135" fill="none" stroke="#eee" stroke-width="2.500"/>
            <path d="M2596 1053L3250 1014C3320 1010 3360 1006 3382 980" fill="none" stroke="#000" stroke-width="2.500"/>
          </svg>
        </div>
        <div class="page-foot"></div>
        <div class="ff-hscroll"><i></i></div>
      </div>
      <div class="ff-vscroll">
        <span class="sc-btn"><svg viewBox="0 0 16 10"><path d="M2 9l6-6 6 6" fill="none" stroke="#444" stroke-width="2.500"/></svg></span>
        <i class="sc-thumb"></i>
        <svg class="sc-dn" viewBox="0 0 16 10"><path d="M2 2l6 6 6-6" fill="none" stroke="#555" stroke-width="3"/></svg>
      </div>
    </div>
  </section>

  <footer class="taskbar">
    <span class="slot s-first"><svg class="tk" viewBox="0 0 36 36"><path d="M2 6l14-2v13H2ZM18 4l16-3v16H18ZM2 19h14v13L2 30ZM18 19h16v16l-16-3Z" fill="#000"/></svg></span>
    <span class="slot s-first"><svg class="tk" viewBox="0 0 36 36"><circle cx="21" cy="13" r="11" fill="none" stroke="#000" stroke-width="2"/><path d="M14 22L4 35" stroke="#000" stroke-width="2"/></svg></span>
    <span class="slot s-first"><svg class="tk" viewBox="0 0 36 36"><path d="M3 2h22M3 8h22M3 30h22M3 35h22M3 13h22v12H3ZM32 2v6M32 18v16" fill="none" stroke="#000" stroke-width="2"/><circle cx="32" cy="13" r="3" fill="#000"/></svg></span>
    <span class="slot s-first s-gap"><svg class="tk" viewBox="0 0 36 36"><path d="M6 4h16l4 6H6Z" fill="#f3b72c"/><rect x="6" y="10" width="24" height="24" fill="#ffd35b"/><rect x="14" y="24" width="10" height="10" fill="#3f8fd6"/></svg></span>
    <span class="slot run"><svg class="tk" viewBox="0 0 36 36"><path d="M4 2h28v30a2 2 0 0 1-2 2H6a2 2 0 0 1-2-2Z" fill="#3b55c8"/><rect x="9" y="2" width="16" height="10" fill="#e8e8ff"/><rect x="18" y="3" width="4" height="8" fill="#3b55c8"/><rect x="8" y="16" width="20" height="15" fill="#f4f4f4"/><path d="M10 20h16M10 24h16" stroke="#c44" stroke-width="1.500"/></svg></span>
    <span class="slot run"><svg class="tk" viewBox="0 0 36 36"><circle cx="18" cy="18" r="15" fill="#1b6fc4"/><path d="M9 12h16v13H9Z" fill="#eef"/><path d="M9 12l8 8 8-8" fill="none" stroke="#aac" stroke-width="1.500"/><path d="M18 1c8 5 10 12 6 18-2-6-6-10-10-10Z" fill="#0a3d8f"/></svg></span>
    <span class="slot"><svg class="tk" viewBox="0 0 36 36"><path d="M6 6l5 9c4-4 10-4 14 0l4-12 0 20c0 8-6 10-11 10S7 30 7 23Z" fill="#5e5a50"/><circle cx="14" cy="19" r="3.500" fill="#fff"/><circle cx="23" cy="19" r="3.500" fill="#fff"/><circle cx="14.500" cy="19.500" r="1.500" fill="#000"/><circle cx="22.500" cy="19.500" r="1.500" fill="#000"/></svg></span>
    <span class="slot"><span class="app-tile t-br">Br</span></span>
    <span class="slot run active"><span class="app-tile t-ai">Ai</span></span>
    <span class="slot"><span class="app-tile t-ps">Ps</span></span>
    <span class="slot run"><svg class="tk" viewBox="0 0 36 36"><path d="M6 1h22v34H6Z" fill="#eef" stroke="#888"/><path d="M6 20c8 0 16-2 22-6v21H6Z" fill="#8cc63f"/><path d="M12 6v22M17 10l4 4-4 4" fill="none" stroke="#333" stroke-width="2"/><path d="M32 1l-11 28" stroke="#c9963a" stroke-width="3"/></svg></span>
    <span class="slot"><svg class="tk" viewBox="0 0 36 36"><circle cx="17" cy="18" r="12" fill="none" stroke="#82b92e" stroke-width="6"/><path d="M22 24l10 10" stroke="#82b92e" stroke-width="6"/><path d="M14 18l10-3 2 10Z" fill="#e8a62a"/></svg></span>
    <span class="slot"><svg class="tk" viewBox="0 0 36 36"><circle cx="18" cy="18" r="16" fill="#e6e8ea" stroke="#8aa"/><path d="M4 22c8-14 18-14 28 0M22 2c-8 10-6 20 4 30" fill="none" stroke="#2a8f7f" stroke-width="3.500"/></svg></span>
    <span class="slot"><svg class="tk" viewBox="0 0 36 36"><rect x="4" y="1" width="28" height="34" fill="#eef6ee" stroke="#1e7b45"/><rect x="8" y="5" width="16" height="20" fill="#1e7b45"/><text class="xl" x="11" y="21">X</text><path d="M18 26l14 8M22 14h8M22 20h8" stroke="#7fb08e"/></svg></span>
    <span class="slot run half"><svg class="tk" viewBox="0 0 36 36"><path d="M14 2l8 4-8 14-8-4Z" fill="#ef6a5e"/><path d="M22 6l8 4-4 10-8-4Z" fill="#f3c34a"/><path d="M2 18l8-6 8 6-8 8Z" fill="#4a8fe7"/><path d="M18 18l14 0-6 8-8 0Z" fill="#5bbd72"/><path d="M10 26h16l-8 9Z" fill="#f6d557"/></svg></span>
    <span class="slot run half"><svg class="tk tk-ff"><use href="#ffLogo"/></svg></span>
    <span class="slot run"><svg class="tk" viewBox="0 0 36 36"><g fill="#f09020"><circle cx="18" cy="6" r="5"/><circle cx="29" cy="11" r="5"/><circle cx="31" cy="23" r="5"/><circle cx="7" cy="11" r="5"/><circle cx="5" cy="23" r="5"/><circle cx="18" cy="29" r="6"/><circle cx="18" cy="18" r="12"/></g><circle cx="18" cy="18" r="7" fill="#c9362a"/><circle cx="18" cy="18" r="3" fill="#fff"/></svg></span>
    <div class="tray">
      <svg class="tr-up" viewBox="0 0 26 14"><path d="M1 13L13 2l12 11" fill="none" stroke="#111" stroke-width="1.600"/></svg>
      <svg class="tr-wifi" viewBox="0 0 24 24"><path d="M1 24C1 12 12 1 24 1M6 24C6 15 15 6 24 6M11 24c0-7 6-13 13-13" fill="none" stroke="#9b9690" stroke-width="1.600"/><circle cx="21" cy="22" r="3" fill="#111"/><path d="M16 24c0-4 4-8 8-8" fill="none" stroke="#111" stroke-width="2"/></svg>
      <svg class="tr-snd" viewBox="0 0 32 30"><path d="M2 10h5l8-8v26l-8-8H2Z" fill="none" stroke="#111" stroke-width="1.800"/><path d="M19 10c2 3 2 7 0 10" fill="none" stroke="#111" stroke-width="1.600"/><path d="M23 6c4 5 4 13 0 18M27 2c6 7 6 19 0 26" fill="none" stroke="#a09a94" stroke-width="1.600"/></svg>
      <span class="tr-time">14:11</span>
      <svg class="tr-msg" viewBox="0 0 32 34"><path d="M1 2h30v23H21l-5 6-5-6H1Z" fill="none" stroke="#111" stroke-width="2"/></svg>
      <i class="tr-show"></i>
    </div>
  </footer>
</main>
</body>
</html>
```

FILE: styles.css
```css
* { box-sizing: border-box; }
html, body { margin: 0; padding: 0; }
body { font-family: "Noto Sans", sans-serif; color: #222; overflow: hidden; }
.defs { display: block; width: 0; height: 0; }
hr { margin: 0; border: 0; }
i { font-style: normal; display: block; }
svg { display: block; flex: none; }

.desktop { position: relative; width: 3840px; height: 2160px; overflow: hidden; background: linear-gradient(#e4847d, #e78681 40%, #ea8c88 85%, #e98a84); }

/* desktop shortcut */
.shortcut { position: absolute; left: 1840px; top: 1846px; width: 118px; display: flex; flex-direction: column; align-items: center; }
.shortcut-logo { width: 83px; height: 87px; margin-right: -2px; }
.shortcut-label { margin-top: 12px; font-size: 23px; line-height: 30px; color: #fff; text-shadow: 1px 1px 2px #000, 0 0 2px #000; white-space: nowrap; }

/* Illustrator window */
.ai { position: absolute; left: 0; top: 0; width: 1836px; height: 2100px; display: flex; flex-direction: column; background: #e4e6e4; border-top: 3px solid #7c6a68; border-left: 3px solid #7c6a68; border-right: 3px solid #8a7a78; border-bottom: 2px solid #7a7070; box-shadow: 3px 0 6px rgba(90, 50, 50, .35); }
.ai-menu { height: 63px; display: flex; align-items: center; background: #d6d6d6; font-size: 22px; }
.ai-logo { width: 102px; padding-left: 20px; font-size: 50px; line-height: 50px; font-weight: 700; color: #bcbcbc; font-family: "Liberation Sans", sans-serif; letter-spacing: -2px; }
.ai-menu-items { display: flex; gap: 36px; color: #2a2a2a; width: 970px; }
.vsep { width: 2px; height: 40px; background: #aaa; }
.br-badge { margin-left: 31px; width: 32px; height: 32px; background: linear-gradient(#555, #8a8a8a); color: #222; font-size: 18px; line-height: 32px; text-align: center; border-top: 2px solid #444; }
.layout-ic { margin-left: 39px; width: 36px; height: 30px; }
.tri-down { width: 0; height: 0; border-left: 7px solid transparent; border-right: 7px solid transparent; border-top: 10px solid #222; }
.tri-a { margin-left: 12px; }
.sep-b { margin-left: 315px; }
.tri-b { margin-left: 42px; }
.winbtns { margin-left: 19px; display: flex; width: 184px; height: 36px; border: 2px solid #3c3c3c; border-radius: 6px; overflow: hidden; }
.winbtn { flex: 0 0 49px; display: flex; align-items: center; justify-content: center; background: linear-gradient(#e0e0e0 0%, #d0d0d0 50%, #b0b0b0 52%, #d0d0d0 100%); border-right: 2px solid #444; }
.w-min { width: 24px; height: 11px; margin-top: 12px; background: #fff; border: 2px solid #222; }
.w-max { width: 22px; height: 22px; border: 2px solid #222; background: #f0f0f0; }
.w-max::after { content: ""; display: block; margin: 4px; width: 10px; height: 10px; border: 2px solid #222; background: #999; }
.w-close { flex: 1; border: 0; background: linear-gradient(#e56a58 0, #dd5a46 48%, #bc2f1a 52%, #d9533d 100%); color: #fff; font: 700 26px/1 "Liberation Sans", sans-serif; text-shadow: 0 0 2px #000; }

.ai-control { margin-left: 7px; width: 1817px; height: 62px; display: flex; align-items: center; background: #d6d6d6; border: 2px solid #444; border-width: 2px 2px 0 2px; font-size: 19px; white-space: nowrap; }
.grip-v { margin-left: 7px; width: 6px; height: 42px; background: repeating-linear-gradient(#999 0 2px, transparent 2px 4px); }
.ctl-path { margin-left: 15px; width: 197px; align-self: flex-start; padding-top: 9px; line-height: 26px; }
.swatch-sel { display: flex; width: 65px; height: 41px; border: 2px solid #aaa; background: #fff; }
.stroke-sel { margin-left: 12px; }
.style-sel { margin-left: 25px; }
.sw { flex: 1; height: 100%; width: 40px; }
.sw-blank { background: #fff; display: block; }
.sel-btn { flex: 0 0 22px; height: 100%; display: flex; align-items: center; justify-content: center; background: #eaeaea; border-left: 2px solid #ccc; margin-left: auto; }
.chevb { width: 14px; height: 12px; }
.chev { width: 16px; height: 10px; }
.ctl-link { color: #0000cc; border-bottom: 2px dotted #0000cc; line-height: 24px; }
.lk-kontur { margin-left: 23px; width: 68px; }
.num-field { display: flex; align-items: center; background: #fff; border: 2px solid #aaa; }
.nf-kontur { margin-left: 4px; width: 129px; height: 40px; }
.spin { flex: 0 0 26px; height: 100%; display: flex; flex-direction: column; align-items: center; justify-content: space-evenly; background: #d6d6d6; border: 1px solid #aaa; }
.spin i { width: 0; height: 0; border-left: 6px solid transparent; border-right: 6px solid transparent; border-bottom: 8px solid #222; }
.spin i + i { border-bottom: 0; border-top: 8px solid #222; }
.num-val { margin-left: 12px; flex: 1; font-size: 20px; }
.num-field .chev { margin-right: 12px; }
.line-sel { display: flex; align-items: center; height: 41px; background: #fff; border: 2px solid #aaa; }
.ls-gleich { margin-left: 19px; width: 212px; }
.ls-einfach { margin-left: 19px; width: 210px; }
.ln { width: 80px; height: 4px; margin: 0 11px; background: #000; flex: none; }
.ln-thick { width: 90px; height: 6px; margin: 0 10px 0 8px; }
.ctl-stil { margin-left: 19px; width: 33px; }
.lk-deck { margin-left: 16px; width: 87px; }
.recolor { margin-left: 25px; width: 30px; height: 40px; }
.lk-aus { margin-left: 20px; width: 94px; }
.lk-trans { margin-left: 35px; width: 135px; font-size: 18.5px; }
.isolate-ic { margin-left: 22px; width: 30px; height: 40px; }
.mini-drop { margin-left: 3px; width: 18px; height: 46px; border: 2px solid #999; display: flex; align-items: center; justify-content: center; }
.mini-drop .tri-down { border-left-width: 5px; border-right-width: 5px; border-top-width: 8px; }
.xform-ic { margin-left: 12px; width: 33px; height: 40px; }
.pmenu-ic { margin-left: 35px; width: 23px; height: 18px; align-self: flex-start; margin-top: 7px; }

.ai-body { margin: 3px 0 0 7px; width: 1817px; height: 1961px; display: flex; background: #555; }
.side-head { height: 25px; background: linear-gradient(#5a5a5a, #2f2f2f); border-bottom: 2px solid #111; display: flex; align-items: center; padding: 0 8px; }
.head-r { justify-content: flex-end; }
.dbl { width: 14px; height: 12px; }
.tools { width: 69px; flex: none; background: #5a5a5a; border-left: 2px solid #444; }
.tool-panel { height: 1476px; background: #d6d6d6; border-right: 1px solid #444; }
.dots { width: 54px; height: 4px; background: repeating-linear-gradient(90deg, #aaa 0 2px, transparent 2px 4px); }
.tool-grip { height: 34px; display: flex; justify-content: center; padding-top: 7px; }
.tool { height: 42px; position: relative; display: flex; align-items: center; justify-content: center; }
.tool svg { width: 46px; height: 40px; }
.tool.more::after { content: ""; position: absolute; right: 10px; bottom: 2px; border-left: 7px solid transparent; border-bottom: 7px solid #111; }
.tool.on svg { width: 48px; height: 41px; background: #a4c6e8; }
.tool-t { font: 700 40px/40px "Liberation Serif", serif; color: #111; }
.tool-sep { height: 8px; padding: 3px 6px; }
.tool-sep::before { content: ""; display: block; height: 2px; margin: 0 -1px; background: #fff; }
.tool-swap { height: 24px; }
.tool-swap svg { width: 66px; height: 24px; }
.tool-fs { height: 66px; margin-bottom: -2px; }
.tool-fs svg { width: 66px; height: 66px; }
.tool-modes { height: 24px; display: flex; align-items: center; margin-left: 5px; width: 55px; }
.m { flex: 1; height: 18px; display: block; }
.m-c { background: #000; padding: 4px 5px; }
.m-c i { width: 8px; height: 10px; background: #ddd; margin: 0 auto; }
.m-g { background: linear-gradient(90deg, #eee, #333); }
.m-n svg { width: 100%; height: 18px; }
.tool-draw { height: 34px; }
.tool-draw svg { height: 36px; }

.doc { flex: 1; min-width: 0; display: flex; flex-direction: column; }
.tabstrip { height: 41px; flex: none; background: linear-gradient(#8f8f8f, #7c7c7c); border-bottom: 2px solid #333; }
.doc-tab { width: 453px; height: 39px; display: flex; align-items: center; padding-left: 19px; background: #dfdfdf; font-size: 22px; color: #2a2a3a; white-space: nowrap; }
.tab-x { margin-left: 10px; width: 22px; height: 30px; background: #bbb; border: 1px solid #999; border-radius: 4px; text-align: center; color: #777; line-height: 24px; font-size: 20px; }
.workspace { height: 1886px; flex: none; display: flex; position: relative; }
.artwork { flex: 1; min-width: 0; background: #fff; overflow: hidden; }
.art-svg { width: 100%; height: 100%; }
.ai-vscroll { width: 34px; flex: none; background: #f0f0f0; display: flex; flex-direction: column; justify-content: space-between; align-items: center; padding: 12px 0 14px; }
.sc-ic { width: 16px; height: 10px; }
.status { height: 34px; flex: none; display: flex; background: #d0d0d0; border-bottom: 2px solid #333; font-size: 19px; white-space: nowrap; }
.st-field { display: flex; align-items: center; background: #fff; border-top: 3px solid #777; }
.st-zoom { width: 119px; padding-left: 12px; gap: 26px; }
.st-page { width: 89px; padding-left: 16px; gap: 46px; }
.st-field span { flex: 0 0 auto; }
.st-zoom span { width: 50px; }
.st-nav { width: 66px; display: flex; justify-content: space-around; align-items: center; color: #999; font-size: 16px; background: #c8c8c8; border-top: 3px solid #bbb; }
.st-tool { width: 357px; position: relative; display: flex; align-items: center; justify-content: center; background: #d6d6d6; border-top: 3px solid #bbb; box-shadow: inset 0 2px #fff, inset 0 -3px #999; color: #1f1f2a; }
.st-arrow { position: absolute; right: 12px; top: 8px; border-left: 9px solid #111; border-top: 8px solid transparent; border-bottom: 8px solid transparent; }
.st-scroll { flex: 1; background: #f0f0f0; display: flex; align-items: center; padding: 0 14px 0 8px; border-top: 3px solid #f0f0f0; }
.sc-h { width: 10px; height: 16px; }
.st-thumb { margin-left: 433px; width: 34px; height: 100%; background: #ccc; }
.st-thumb + .sc-h { margin-left: auto; margin-right: 38px; }

.dock { width: 71px; flex: none; background: #5a5a5a; display: flex; flex-direction: column; border-left: 2px solid #444; border-right: 2px solid #444; }
.dock-group { height: 148px; background: #d6d6d6; border-bottom: 2px solid #444; }
.g1 { height: 146px; }
.g3, .g4 { height: 208px; }
.g7 { height: 192px; border-bottom: 0; }
.dock-grip { height: 20px; display: flex; justify-content: center; padding-top: 10px; }
.g1 .dock-grip { height: 23px; padding-top: 7px; }
.dock-ic { height: 60px; display: flex; align-items: center; justify-content: center; }
.g1 .dock-ic { height: 56px; }
.dock-ic svg { width: 42px; height: 36px; }
.dock-ic.on { margin: 4px 3px; height: 52px; background: linear-gradient(#8e8e8e, #a8a8a8); border: 2px solid #666; border-radius: 5px; box-shadow: 0 0 0 2px #eee; }
.dock-rest { flex: 1; }

/* Stroke panel */
.stroke-panel { position: absolute; left: 1322px; top: 671px; width: 430px; height: 590px; background: #d4d4d4; border: 2px solid #333; border-top: 8px solid #3f3f3f; font-size: 18.5px; color: #222; white-space: nowrap; overflow: hidden; }
.sp-tabs { height: 33px; display: flex; align-items: center; background: linear-gradient(#8c8c8c, #727272); font-weight: 600; font-size: 17.500px; color: #333; }
.sp-tab { height: 100%; display: flex; align-items: center; border-right: 1px solid #555; overflow: hidden; }
.sp-on { width: 116px; padding-left: 8px; gap: 6px; background: linear-gradient(#f2f2f2, #c8c8c8); border-right: 0; color: #223; }
.updown { width: 10px; height: 16px; position: relative; }
.updown::before, .updown::after { content: ""; position: absolute; left: 0; border-left: 5px solid transparent; border-right: 5px solid transparent; }
.updown::before { top: 0; border-bottom: 6px solid #222; }
.updown::after { bottom: 0; border-top: 6px solid #222; }
.t-verlauf { width: 85px; padding-left: 14px; }
.t-trans { width: 99px; padding-left: 13px; }
.t-trans b { font-weight: 600; }
.sp-more { margin-left: 47px; width: 18px; height: 14px; }
.sp-tick { margin-left: 15px; width: 1px; height: 18px; background: #555; }
.sp-menu { margin-left: 10px; width: 30px; height: 16px; }
.sp-body { display: flex; flex-direction: column; }
.sp-row { display: flex; align-items: center; height: 38px; margin-top: 10px; padding-left: 8px; }
.r-first { margin-top: 11px; height: 39px; }
.sp-l { width: 103px; margin-right: 7px; text-align: right; flex: none; }
.sp-wide { letter-spacing: .7px; }
.sp-l2 { width: 101px; }
.nf-staerke { width: 160px; height: 39px; }
.nf-max { width: 74px; height: 38px; }
.nf-max .num-val, .nf-staerke .num-val { font-size: 18.500px; }
.nf-staerke .num-val { margin-left: 12px; }
.nf-max .num-val { margin-left: 9px; }
.seg { width: 110px; height: 100%; display: flex; align-items: center; justify-content: space-between; padding: 0 3px; border: 2px solid #aaa; outline: 1px solid #fff; outline-offset: 0; background: #c6c6c6; }
.seg-b { width: 33px; height: 32px; display: flex; align-items: center; justify-content: center; }
.seg-b svg { width: 24px; height: 24px; }
.seg-b.on { background: #a6c8e6; }
.seg-b.dk { background: #8a8a8a; }
.sp-max { margin-left: 27px; width: 48px; flex: none; }
.nf-max { margin-left: 7px; }
.sp-x { margin-left: 5px; }
.sp-div { height: 2px; margin: 10px 26px 0 8px; background: #aaa; box-shadow: 0 1px #eee; }
.dash-row { height: 33px; margin-top: 10px; }
.check { width: 25px; height: 25px; border: 2px solid #333; background: #e4e4e4; }
.check svg { width: 21px; height: 21px; }
.check-l { margin-left: 4px; width: 233px; flex: none; }
.dash-a { width: 55px; height: 24px; }
.dash-b { margin-left: 11px; width: 63px; height: 33px; padding: 4px; background: #a6c8e6; border: 2px solid #6ea8dc; }
.dash-b svg { width: 55px; height: 24px; margin-left: -2px; margin-top: -1px; }
.dash-fields { height: 34px; gap: 8px; }
.df { width: 58px; height: 34px; background: #fff; border: 2px solid #999; text-align: center; line-height: 30px; display: flex; justify-content: center; }
.df-focus { border-color: #1e78c8; gap: 3px; }
.caret { width: 1px; height: 26px; margin: 2px 0 0; background: #000; }
.dash-labels { display: grid; grid-template-columns: repeat(6, 66px); justify-items: center; margin: 3px 0 0; padding-left: 4px; height: 23px; line-height: 23px; }
.arrow-sel { width: 86px; height: 39px; background: #fff; display: flex; align-items: center; }
.as-2 { margin-left: 26px; }
.ln-a { width: 52px; height: 3px; margin-left: 8px; background: #555; }
.blue-btn { margin-left: auto; margin-right: 3px; width: 20px; height: 100%; display: flex; align-items: center; justify-content: center; background: #bccbd8; }
.blue-btn .tri-down { border-left-width: 5px; border-right-width: 5px; border-top-width: 6px; }
.swap-ic { margin-left: 57px; width: 26px; height: 22px; }
.dis { color: #9a9a9a; text-shadow: 1px 1px 0 #eee; }
.scale-f { width: 86px; height: 42px; display: flex; border: 2px solid #aaa; background: #f0f0f0; flex: none; }
.scale-f span { width: 54px; border: 2px solid #eee; background: #d4d4d4; text-align: center; line-height: 30px; }
.scale-f i { flex: 1; text-align: center; font-weight: 700; line-height: 34px; font-size: 22px; color: #bbb; }
.pct { width: 26px; text-align: center; }
.chain { margin-left: 23px; width: 14px; height: 26px; }
.sp-row.dis { height: 39px; }
.align-g { width: 90px; height: 39px; display: flex; align-items: center; gap: 14px; padding-left: 9px; border: 2px solid #aaa; box-shadow: 0 0 0 1px #eee; }
.align-g svg { width: 32px; height: 26px; }
.prof-sel { width: 192px; height: 39px; display: flex; align-items: center; background: #fff; }
.ln-p { width: 62px; height: 4px; margin: 0 12px 0 13px; background: #000; flex: none; }
.prof-a { margin-left: 17px; width: 27px; height: 26px; }
.prof-b { margin-left: 19px; width: 22px; height: 26px; }

.tooltip { position: absolute; left: 1646px; top: 969px; width: 237px; height: 37px; padding-left: 7px; background: #ffffe3; border: 1px solid #555; border-right: 0; font-size: 22px; line-height: 34px; color: #111; white-space: nowrap; overflow: hidden; z-index: 3; }

/* Firefox window */
.ff { position: absolute; left: 1950px; top: 0; width: 1890px; height: 2100px; display: flex; flex-direction: column; background: #fff; border-left: 2px solid #86625f; box-shadow: -3px 0 5px rgba(90, 50, 50, .3); }
.ff-title { height: 68px; flex: none; display: flex; align-items: flex-end; background: #20223f; border-top: 2px solid #15162b; }
.ff-tab { margin-left: 78px; width: 449px; height: 66px; display: flex; align-items: center; padding: 0 25px 0 19px; background: #f9f9fa; border-top: 4px solid #0a84ff; }
.ff-tab-t { font-size: 21px; color: #444; flex: 1; white-space: nowrap; }
.ff-tab-x { width: 18px; height: 20px; }
.ff-plus { margin: 0 0 19px 22px; width: 24px; height: 24px; }
.ff-caps { margin-left: auto; margin-bottom: 24px; display: flex; gap: 70px; padding-right: 33px; }
.ff-caps svg { width: 22px; height: 22px; }
.ff-bar { height: 82px; flex: none; display: flex; align-items: center; background: #f9f9fa; border-bottom: 2px solid #e0e0e0; }
.ff-back { margin-left: 6px; width: 66px; height: 66px; border: 2px solid #b5b5b5; border-radius: 50%; background: #fff; display: flex; align-items: center; justify-content: center; }
.ff-back svg { width: 32px; height: 32px; }
.tb { width: 32px; height: 36px; }
.tb-fw { margin-left: 17px; }
.tb-re { margin-left: 33px; }
.tb-ho { margin-left: 30px; }
.urlbar { margin-left: 175px; width: 900px; height: 60px; display: flex; align-items: center; background: #fff; border: 2px solid #bdbdbd; border-radius: 4px; box-shadow: 0 1px 3px rgba(0, 0, 0, .2); }
.u-shield { margin-left: 16px; width: 26px; height: 30px; }
.u-sep { margin-left: 16px; width: 1px; height: 46px; background: #ddd; }
.u-lock { margin-left: 16px; width: 26px; height: 32px; }
.u-text { margin-left: 19px; width: 549px; flex: none; font-size: 24.500px; color: #6f6f73; white-space: nowrap; overflow: hidden; }
.u-text b { font-weight: 400; color: #000; }
.u-text em { font-style: normal; color: #aaa; }
.u-text u { text-decoration: none; color: #ddd; }
.u-dots { margin-left: 74px; width: 32px; height: 10px; }
.u-ic { width: 32px; height: 32px; margin-left: 24px; }
.u-star { margin-left: 24px; }
.tb-lib { margin-left: 175px; }
.tb-dl { margin-left: 31px; }
.tb-bk { margin-left: 34px; }
.tb-sb { margin-left: 31px; }
.tb-ac { margin-left: 32px; }
.tb-sep { margin-left: 23px; width: 1px; height: 70px; background: #ddd; }
.tb-mn { margin-left: 12px; }
.ff-content { flex: 1; min-height: 0; display: flex; }
.page { width: 1856px; flex: none; display: flex; flex-direction: column; font-family: "Liberation Mono", monospace; background: #fff; }
.site-nav { height: 83px; flex: none; margin-right: 3px; background: #4a6347; font-size: 32px; line-height: 37px; padding-top: 1px; }
.site-links { display: flex; }
.site-nav a { display: block; }
.site-links .link-muted { width: 743px; }
.link-muted { color: #9fb899; }
.link-bright { color: #a9e8a2; }
.site-h1 { margin: 0; height: 170px; flex: none; padding-top: 56px; font-size: 63.6px; font-weight: 400; line-height: 72px; color: #222; }
.site-h1 b { font-weight: 700; color: #000; }
.site-ctrl { height: 73px; flex: none; display: flex; align-items: flex-start; }
.site-ctrl button { height: 40px; padding: 0; background: #e1e1e1; border: 2px solid #c4c4c4; display: flex; align-items: center; justify-content: center; }
.site-ctrl button svg { height: 24px; width: 20px; }
.b-play { width: 56px; }
.b-pause { width: 52px; margin-left: 21px; }
.b-step { width: 50px; margin-left: 22px; }
.b-rew { width: 58px; margin-left: 21px; }
.site-ctrl .b-browse { width: 143px; height: 37px; margin: 2px 0 0 98px; font: 25px "Noto Sans", sans-serif; color: #111; }
.hl { margin-left: 358px; display: flex; align-items: flex-start; padding-top: 4px; font-size: 32px; line-height: 36px; color: #333; white-space: nowrap; }
.hl-box { width: 26px; height: 25px; margin: 1px 8px 0 0; border: 2px solid #444; }
.clip-stage { height: 1536px; flex: none; background: #666; }
.clip-stage svg { width: 100%; height: 100%; }
.page-foot { height: 72px; flex: none; }
.ff-hscroll { flex: 1; background: #f0f0f0; display: block; padding-left: 38px; }
.ff-hscroll i { width: 1581px; height: 100%; background: #cdcdcd; }
.ff-vscroll { flex: 1; display: flex; flex-direction: column; align-items: center; background: #f0f0f0; margin-left: 2px; }
.sc-btn { height: 34px; display: flex; align-items: center; }
.sc-btn svg { width: 14px; height: 10px; }
.sc-thumb { width: 100%; height: 1810px; background: #cdcdcd; }
.sc-dn { margin-top: 66px; width: 16px; height: 10px; }

/* Taskbar */
.taskbar { position: absolute; left: 0; top: 2100px; width: 3840px; height: 60px; display: flex; background: linear-gradient(90deg, #f0dcdc, #efdcdb 40%, #f3e6dc); }
.slot { flex: 0 0 74.33px; height: 60px; display: flex; align-items: center; justify-content: center; position: relative; padding-bottom: 3px; }
.s-first { flex-basis: 72px; }
.s-gap { margin-left: 4px; flex-basis: 74.33px; }
.tk { width: 40px; height: 40px; }
.tk-ff { width: 44px; height: 44px; }
.run::after { content: ""; position: absolute; left: 8px; right: 8px; bottom: 0; height: 3px; background: #2f7d63; }
.run.half::after { background: linear-gradient(90deg, #2f7d63 60%, #8fb8a8 60%); }
.active { background: #f8f0ee; }
.active::after { left: 0; right: 0; }
.app-tile { width: 30px; height: 40px; display: block; text-align: center; font: 700 22px/40px "Liberation Sans", sans-serif; border-radius: 3px; box-shadow: 0 2px 3px rgba(0, 0, 0, .35); }
.t-br { background: linear-gradient(#a84a1f, #7a3212); color: #3a1606; }
.t-ai { background: linear-gradient(#e07a0c, #b85a04); color: #ffdf8e; }
.t-ps { background: linear-gradient(#1677c0, #0e4f90); color: #9fd8f7; }
.xl { font: 700 15px "Liberation Sans", sans-serif; fill: #fff; }
.tray { margin-left: auto; display: flex; align-items: center; height: 60px; }
.tr-up { width: 26px; height: 14px; }
.tr-wifi { margin-left: 43px; width: 24px; height: 24px; }
.tr-snd { margin-left: 32px; width: 32px; height: 30px; }
.tr-time { margin-left: 30px; width: 54px; font: 22px/1 "Noto Sans", sans-serif; color: #222; white-space: nowrap; }
.tr-msg { margin-left: 38px; width: 32px; height: 34px; }
.tr-show { margin-left: 42px; width: 2px; height: 60px; background: #cdbfb5; margin-right: 6px; }
```
